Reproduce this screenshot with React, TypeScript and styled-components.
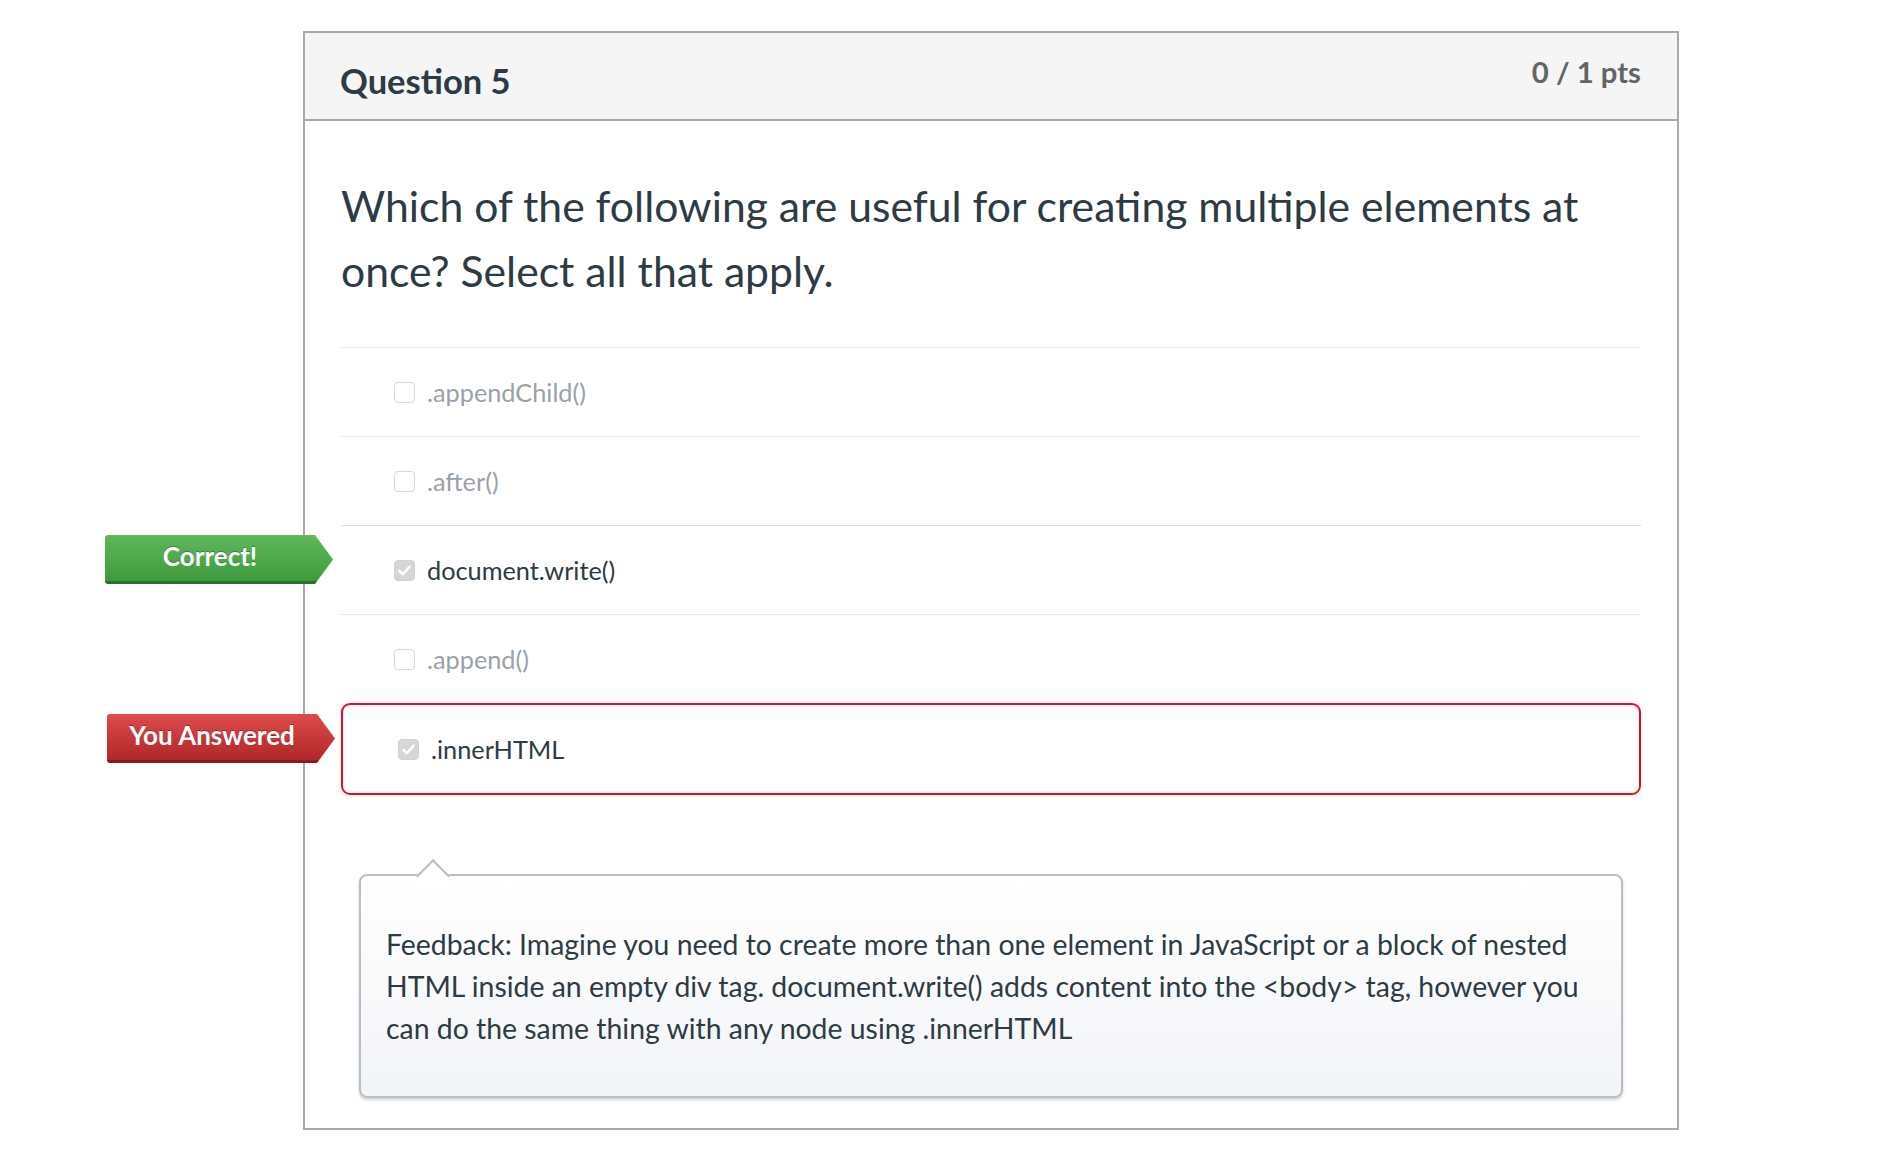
import React from "react";
import styled, { createGlobalStyle, css } from "styled-components";

const Global = createGlobalStyle`
  html, body { margin: 0; padding: 0; background: #ffffff; }
  body { font-family: Lato, "Open Sans", "Liberation Sans", sans-serif; color: #2d3b45; }
  * { box-sizing: border-box; }
`;

const Page = styled.div`
  padding: 31px 0 0 303px;
  width: 1880px;
  height: 1170px;
`;

const Card = styled.section`
  width: 1376px;
  border: 2px solid #aaaaaa;
  background: #ffffff;
`;

const Header = styled.header`
  height: 88px;
  background: #f5f5f5;
  border-bottom: 2px solid #aaaaaa;
  padding: 0 36px;
  display: flex;
  justify-content: space-between;
  align-items: flex-start;
`;

const Title = styled.h2`
  margin: 27px 0 0 -1px;
  font-size: 34.5px;
  font-weight: 700;
  line-height: 1.2;
  color: #2d3b45;
`;

const Points = styled.div`
  margin-top: 21px;
  font-size: 29.3px;
  font-weight: 700;
  line-height: 1.2;
  color: #626568;
`;

const Body = styled.div`
  padding: 0 36px 30px;
`;

const QuestionText = styled.p`
  margin: 52px 0 44px 0;
  font-size: 42.7px;
  line-height: 65px;
  color: #2d3b45;
`;

const AnswerList = styled.div`
  display: flex;
  flex-direction: column;
`;

const AnswerRow = styled.div<{ $selected?: boolean; $darkTop?: boolean; $wrong?: boolean }>`
  position: relative;
  height: 89px;
  display: flex;
  align-items: center;
  padding-left: 53px;
  border-top: 1px solid ${(p) => (p.$darkTop ? "#dcdcdc" : "#e8e8e8")};
  font-size: 25.3px;
  color: ${(p) => (p.$selected ? "#2d3b45" : "#9aa1a8")};
  ${(p) =>
    p.$wrong &&
    css`
      height: 92px;
      border: 2px solid #ee0a1e;
      border-radius: 9px;
      padding-left: 55px;
    `}
`;

const Box = styled.span<{ $checked?: boolean }>`
  width: 21px;
  height: 21px;
  margin-right: 12px;
  border-radius: 4px;
  border: 1px solid ${(p) => (p.$checked ? "#d2d2d2" : "#d8d8d8")};
  background: ${(p) => (p.$checked ? "#d6d6d6" : "#ffffff")};
  display: inline-flex;
  align-items: center;
  justify-content: center;
  flex: none;
`;

const Label = styled.span`
  line-height: 1.2;
`;

const Badge = styled.div<{ $tone: "green" | "red" }>`
  position: absolute;
  right: calc(100% + 8px);
  top: 9px;
  width: 228px;
  height: 49px;
  padding-right: 18px;
  display: flex;
  align-items: center;
  justify-content: center;
  font-size: 26px;
  font-weight: 700;
  color: #ffffff;
  border-radius: 3px 0 0 3px;
  clip-path: polygon(0 0, calc(100% - 18px) 0, 100% 50%, calc(100% - 18px) 100%, 0 100%);
  ${(p) =>
    p.$tone === "green"
      ? css`
          background: linear-gradient(#5fb95c, #3e9a3c);
          border-bottom: 3px solid #2c6e2b;
          text-shadow: 0 -1px 0 rgba(0, 0, 0, 0.3);
        `
      : css`
          background: linear-gradient(#e04b4b, #b02727);
          border-bottom: 3px solid #8a1c1c;
          text-shadow: 0 -1px 0 rgba(0, 0, 0, 0.3);
        `}
`;

const BadgeText = styled.span`
  line-height: 1;
  margin-top: -4px;
`;

const Feedback = styled.div`
  position: relative;
  margin: 79px 18px 0;
  border: 2px solid #b6bfc8;
  border-radius: 8px;
  background: linear-gradient(#ffffff, #f3f4f6);
  box-shadow: 0 2px 3px rgba(0, 0, 0, 0.18);
  padding: 47px 25px 47px;
  font-size: 28.4px;
  line-height: 42px;
  color: #2d3b45;

  &::before {
    content: "";
    position: absolute;
    left: 60px;
    top: -12px;
    width: 22px;
    height: 22px;
    background: #ffffff;
    border-top: 2px solid #b6bfc8;
    border-left: 2px solid #b6bfc8;
    transform: rotate(45deg);
  }
`;

const FeedbackText = styled.p`
  margin: 0;
`;

const Check = () => (
  <svg width="15" height="15" viewBox="0 0 16 16" aria-hidden="true">
    <path d="M2.5 8.5 L6.2 12 L13.5 3.8" fill="none" stroke="#ffffff" strokeWidth="2.6" strokeLinecap="round" strokeLinejoin="round" />
  </svg>
);

type Answer = {
  text: string;
  checked?: boolean;
  badge?: { tone: "green" | "red"; label: string };
  wrong?: boolean;
  darkTop?: boolean;
};

const answers: Answer[] = [
  { text: ".appendChild()" },
  { text: ".after()" },
  { text: "document.write()", checked: true, darkTop: true, badge: { tone: "green", label: "Correct!" } },
  { text: ".append()" },
  { text: ".innerHTML", checked: true, wrong: true, badge: { tone: "red", label: "You Answered" } },
];

export default function App() {
  return (
    <>
      <Global />
      <Page>
        <Card>
          <Header>
            <Title>Question 5</Title>
            <Points>0 / 1 pts</Points>
          </Header>
          <Body>
            <QuestionText>
              Which of the following are useful for creating multiple elements at once? Select all that apply.
            </QuestionText>
            <AnswerList>
              {answers.map((a) => (
                <AnswerRow key={a.text} $selected={a.checked} $darkTop={a.darkTop} $wrong={a.wrong}>
                  {a.badge && (
                    <Badge $tone={a.badge.tone}>
                      <BadgeText>{a.badge.label}</BadgeText>
                    </Badge>
                  )}
                  <Box $checked={a.checked}>{a.checked && <Check />}</Box>
                  <Label>{a.text}</Label>
                </AnswerRow>
              ))}
            </AnswerList>
            <Feedback>
              <FeedbackText>
                Feedback: Imagine you need to create more than one element in JavaScript or a block of nested HTML
                inside an empty div tag. document.write() adds content into the &lt;body&gt; tag, however you can do
                the same thing with any node using .innerHTML
              </FeedbackText>
            </Feedback>
          </Body>
        </Card>
      </Page>
    </>
  );
}
